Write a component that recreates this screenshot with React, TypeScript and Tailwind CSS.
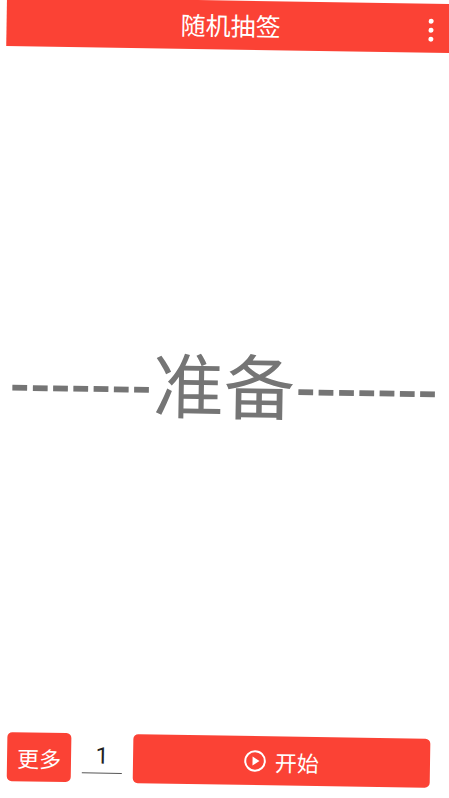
import React from 'react';

const cjk = { fontFamily: '"Noto Sans CJK SC", "Roboto", sans-serif' };

export default function App() {
  return (
    <div className="w-[449px] h-[798px] overflow-hidden bg-white" style={cjk}>
      <div className="w-[460px] h-[805px] ml-[7px] -mt-[3px] origin-top-left rotate-[0.9deg] flex flex-col">
        {/* Top bar */}
        <div className="h-[49px] shrink-0 bg-[#fb4235] flex items-center relative">
          <div className="w-full pr-[12px] text-center text-white text-[25px] leading-none">随机抽签</div>
          <div className="absolute left-[422px] top-[15px] flex flex-col gap-[4px]">
            <span className="block w-[5px] h-[5px] rounded-full bg-white"></span>
            <span className="block w-[5px] h-[5px] rounded-full bg-white"></span>
            <span className="block w-[5px] h-[5px] rounded-full bg-white"></span>
          </div>
        </div>

        {/* Result */}
        <div className="flex-1 flex items-center pl-[9px] pb-[20px]">
          <div className="flex items-baseline whitespace-nowrap text-[71px] leading-none text-[#757575]">
            <span className="text-[54px] font-bold tracking-[0.3px] -translate-y-[7px]">-------</span>
            <span className="px-[1px]">准备</span>
            <span className="text-[54px] font-bold tracking-[0.3px] -translate-y-[7px]">-------</span>
          </div>
        </div>

        {/* Bottom actions */}
        <div className="h-[70px] shrink-0 flex items-start pl-[12px]">
          <button className="w-[64px] h-[49px] rounded-[5px] bg-[#fb4235] text-white text-[22px] leading-none">更多</button>
          <div className="w-[40px] ml-[11px] mt-[9px] h-[31px] border-b border-[#555] text-center text-[23px] leading-[27px] text-[#222]" style={{ fontFamily: 'Roboto, sans-serif' }}>1</div>
          <button className="w-[297px] h-[49px] ml-[11px] rounded-[5px] bg-[#fb4235] text-white text-[22px] leading-none flex items-center justify-center gap-[9px]">
            <svg width="22" height="22" viewBox="0 0 22 22" fill="none">
              <circle cx="11" cy="11" r="9.8" stroke="white" strokeWidth="2" />
              <path d="M8.5 6.5 L15.5 11 L8.5 15.5 Z" fill="white" />
            </svg>
            <span>开始</span>
          </button>
        </div>
      </div>
    </div>
  );
}
